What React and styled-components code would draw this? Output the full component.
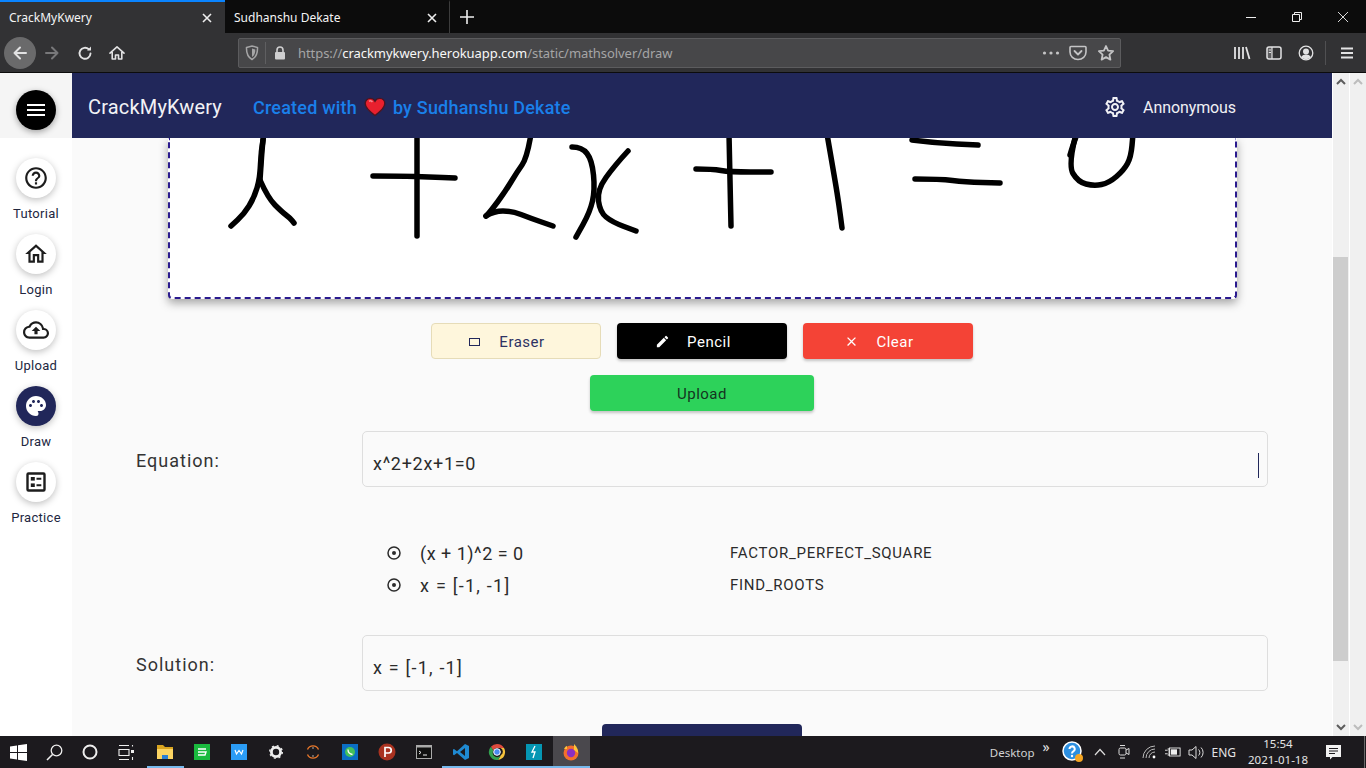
import React from "react";
import styled, { createGlobalStyle } from "styled-components";
import {
  MdClose,
  MdEdit,
  MdHelpOutline,
  MdOutlineCloudUpload,
  MdOutlineHome,
  MdOutlineSettings,
  MdPalette,
} from "react-icons/md";

const GlobalStyle = createGlobalStyle`
  html, body {
    margin: 0;
    padding: 0;
    overflow: hidden;
    background: #1c1a1e;
  }
  * { box-sizing: border-box; }
`;

const Screen = styled.div`
  width: 1366px;
  height: 768px;
  display: flex;
  flex-direction: column;
  overflow: hidden;
  font-family: Roboto, "Liberation Sans", sans-serif;
`;

/* browser chrome */
const TabBar = styled.div`
  height: 33px;
  background: #0c0c0c;
  display: flex;
  align-items: stretch;
  font-family: "Noto Sans", "Open Sans", sans-serif;
  font-size: 12px;
  color: #f4f4f4;
`;

const Tab = styled.div`
  width: 225px;
  display: flex;
  align-items: center;
  justify-content: space-between;
  padding: ${(p) => (p.$active ? "0 12px 0 9px" : "0 11px 0 9px")};
  background: ${(p) => (p.$active ? "#323234" : "transparent")};
  border-top: 2px solid ${(p) => (p.$active ? "#0a84ff" : "transparent")};
  border-right: ${(p) => (p.$active ? "none" : "1px solid #3c3c3c")};
`;

const NewTab = styled.div`
  width: 33px;
  display: flex;
  align-items: center;
  justify-content: center;
`;

const WindowControls = styled.div`
  margin-left: auto;
  display: flex;
`;

const WindowButton = styled.div`
  width: 46px;
  display: flex;
  align-items: center;
  justify-content: center;
`;

const Toolbar = styled.div`
  height: 40px;
  background: #323234;
  border-bottom: 1px solid #0c0c0c;
  display: flex;
  align-items: center;
  padding: 0 3px 0 4px;
  color: #e2e2e3;
`;

const ToolButton = styled.div`
  width: 32px;
  height: 32px;
  border-radius: 50%;
  display: flex;
  align-items: center;
  justify-content: center;
  margin-left: ${(p) => p.$nudge || 0}px;
  background: ${(p) => (p.$hover ? "#6a6a6b" : "transparent")};
  opacity: ${(p) => (p.$dim ? 0.4 : 1)};
`;

const UrlBar = styled.div`
  width: 883px;
  height: 30px;
  margin-left: 105px;
  display: flex;
  align-items: center;
  background: #474749;
  border: 1px solid #5c5c5e;
  border-radius: 2px;
  padding: 0 5px 0 6px;
  font-family: "Noto Sans", "Open Sans", sans-serif;
  font-size: 13px;
  color: #a5a5a6;
`;

const UrlDivider = styled.span`
  width: 1px;
  height: 22px;
  background: #5f5f61;
  margin: 0 7px 0 6px;
`;

const UrlText = styled.span`
  margin: 1px 0 0 11px;
  letter-spacing: -0.06px;
  white-space: nowrap;
  b {
    font-weight: 400;
    color: #f8f8f8;
  }
`;

const UrlActions = styled.div`
  margin-left: auto;
  display: flex;
  align-items: center;
  gap: 6px;
  color: #c4c4c5;
`;

const ToolbarRight = styled.div`
  margin-left: auto;
  display: flex;
  align-items: center;
`;

const ToolDivider = styled.span`
  width: 1px;
  height: 24px;
  background: #505052;
  margin: 0 5px 0 3px;
`;

/* page */
const Viewport = styled.div`
  flex: 1;
  min-height: 0;
  display: flex;
  background: #fff;
`;

const Sidebar = styled.aside`
  width: 72px;
  flex: none;
  background: #fff;
  display: flex;
  flex-direction: column;
  align-items: center;
`;

const SidebarTop = styled.div`
  width: 100%;
  height: 65px;
  background: #f5f5f5;
  display: flex;
  align-items: flex-start;
  justify-content: center;
  padding-top: 17px;
  margin-bottom: 20px;
`;

const MenuButton = styled.div`
  width: 40px;
  height: 40px;
  border-radius: 50%;
  background: #000;
  box-shadow: 0 2px 6px rgba(0, 0, 0, 0.35);
  display: flex;
  flex-direction: column;
  align-items: center;
  justify-content: center;
  gap: 3px;
  span {
    width: 18px;
    height: 2px;
    background: #fff;
  }
`;

const NavItem = styled.div`
  height: 76px;
  display: flex;
  flex-direction: column;
  align-items: center;
  font-size: 13px;
  letter-spacing: 0.3px;
  color: #22273f;
`;

const NavCircle = styled.div`
  width: 40px;
  height: 40px;
  margin-bottom: 8px;
  border-radius: 50%;
  display: flex;
  align-items: center;
  justify-content: center;
  background: ${(p) => (p.$active ? "#21275a" : "#fff")};
  color: ${(p) => (p.$active ? "#fff" : "#1d1d1d")};
  box-shadow: 0 2px 7px rgba(0, 0, 0, 0.25);
`;

const Main = styled.main`
  flex: 1;
  min-width: 0;
  display: flex;
  flex-direction: column;
  background: #fafafa;
`;

const Header = styled.header`
  height: 65px;
  flex: none;
  background: #21275a;
  display: flex;
  align-items: center;
  padding: 3px 96px 0 16px;
  color: #fff;
`;

const Brand = styled.div`
  font-size: 20px;
  letter-spacing: 0.18px;
  width: 165px;
  color: #f2f2f6;
`;

const Credit = styled.div`
  display: flex;
  align-items: center;
  gap: 7px;
  font-size: 18px;
  font-weight: 500;
  letter-spacing: 0.2px;
  color: #1a80ea;
`;

const UserBox = styled.div`
  margin-left: auto;
  display: flex;
  align-items: center;
  gap: 16px;
  font-size: 16px;
  letter-spacing: -0.1px;
  color: #f0f0f4;
`;

const Content = styled.div`
  flex: 1;
  min-height: 0;
  overflow: hidden;
  display: flex;
  flex-direction: column;
  align-items: center;
  padding: 0 64px;
`;

const CanvasBox = styled.div`
  width: 1069px;
  height: 161px;
  flex: none;
  background: #fff;
  border: 2px dashed #2a1a8e;
  border-top: none;
  border-radius: 0 0 4px 4px;
  box-shadow: 0 4px 10px rgba(0, 0, 0, 0.35);
  svg {
    display: block;
    margin-left: -2px;
  }
`;

const ButtonRow = styled.div`
  display: flex;
  gap: 16px;
  margin-top: ${(p) => p.$top}px;
`;

const ToolAction = styled.button`
  width: ${(p) => p.$width || 170}px;
  height: 36px;
  padding: ${(p) => (p.$width ? "1px 0 0" : "1px 18px 0 0")};
  display: flex;
  align-items: center;
  justify-content: center;
  gap: 17px;
  font-family: inherit;
  font-size: 15px;
  letter-spacing: 0.5px;
  border-radius: 4px;
  border: ${(p) => (p.$outlined ? "1px solid #e6dcb8" : "none")};
  background: ${(p) => p.$bg};
  color: ${(p) => p.$fg};
  box-shadow: ${(p) => (p.$outlined ? "none" : "0 2px 3px rgba(0, 0, 0, 0.22)")};
`;

const EraserMark = styled.span`
  width: 11px;
  height: 8px;
  margin-right: 2px;
  border: 1px solid #21275a;
`;

const FieldRow = styled.div`
  width: 100%;
  flex: none;
  display: grid;
  grid-template-columns: 226px 1fr;
  align-items: center;
  margin-top: ${(p) => p.$top}px;
`;

const FieldLabel = styled.label`
  font-size: 18px;
  letter-spacing: 1px;
  color: #333;
  margin-top: 2px;
`;

const FieldValue = styled.div`
  height: 56px;
  background: #fafafa;
  border: 1px solid #dedede;
  border-radius: 5px;
  display: flex;
  align-items: center;
  justify-content: space-between;
  padding: 8px 8px 0 10px;
  font-size: 18px;
  letter-spacing: ${(p) => p.$tracking}px;
  color: #2b2b2b;
`;

const Caret = styled.span`
  width: 1px;
  height: 25px;
  margin-top: 5px;
  background: #21275a;
`;

const Steps = styled.div`
  width: 100%;
  flex: none;
  margin-top: 50px;
  padding-left: 250px;
`;

const StepRow = styled.div`
  height: 32px;
  display: grid;
  grid-template-columns: 34px 310px 1fr;
  align-items: center;
  font-size: 18px;
  color: #2b2b2b;
`;

const StepExpr = styled.span`
  letter-spacing: ${(p) => p.$tracking}px;
`;

const StepName = styled.span`
  font-size: 15px;
  letter-spacing: 0.73px;
`;

const SubmitStub = styled.div`
  width: 200px;
  height: 36px;
  flex: none;
  margin-top: 33px;
  background: #21275a;
  border-radius: 4px;
`;

const ScrollTrack = styled.div`
  width: 17px;
  flex: none;
  background: #f0f0f0;
  border-left: 1px solid #fff;
  display: flex;
  flex-direction: column;
  align-items: center;
  color: ${(p) => (p.$faded ? "#bdbdbd" : "#5d5d5d")};
`;

const ScrollArrow = styled.div`
  height: 17px;
  flex: none;
  margin-top: ${(p) => (p.$end ? "auto" : "0")};
  display: flex;
  align-items: center;
  justify-content: center;
`;

const ScrollThumb = styled.div`
  width: 15px;
  height: 404px;
  margin: 167px 1px 0 0;
  background: #cdcdcd;
`;

/* taskbar */
const Taskbar = styled.footer`
  height: 32px;
  flex: none;
  background: #1c1a1e;
  display: flex;
  align-items: stretch;
  color: #eee;
  font-family: "Noto Sans", "Open Sans", sans-serif;
  font-size: 12px;
`;

const ShellButton = styled.div`
  width: 36px;
  display: flex;
  align-items: center;
  justify-content: center;
`;

const AppSlots = styled.div`
  display: flex;
  margin-left: 3px;
`;

const AppSlot = styled.div`
  width: 36.9px;
  display: flex;
  align-items: center;
  justify-content: center;
  background: ${(p) => (p.$active ? "#4a484d" : "transparent")};
  border-bottom: 2px solid ${(p) => (p.$running ? "#76b9ed" : "transparent")};
  padding-top: 2px;
`;

const Tray = styled.div`
  margin-left: auto;
  display: flex;
  align-items: center;
  color: #e4e4e4;
`;

const DesktopLabel = styled.span`
  font-size: 11.5px;
  color: #d2d2d2;
`;

const TrayChevrons = styled.span`
  width: 20px;
  margin: -12px 0 0 8px;
  font-size: 14px;
`;

const TrayIcon = styled.span`
  width: ${(p) => p.$width || 24}px;
  height: 32px;
  margin-left: ${(p) => p.$gap || 0}px;
  display: flex;
  align-items: center;
  justify-content: center;
`;

const Clock = styled.div`
  width: 72px;
  margin-left: 6px;
  text-align: center;
  line-height: 16px;
  font-size: 11.5px;
`;

const DesktopEdge = styled.span`
  width: 1px;
  height: 32px;
  margin: 0 1px 0 20px;
  background: #6a6a6a;
`;

const Svg = ({ w = 16, h = 16, vb, children, ...rest }) => (
  <svg width={w} height={h} viewBox={vb || `0 0 ${w} ${h}`} fill="none" {...rest}>
    {children}
  </svg>
);

const line = { stroke: "currentColor", strokeWidth: 1.6, strokeLinecap: "round", strokeLinejoin: "round" };

// smooth a freehand stroke through the midpoints of its samples
const strokePath = (pts) => {
  let d = `M${pts[0][0]} ${pts[0][1]}`;
  for (let i = 1; i < pts.length - 1; i++) {
    const mx = (pts[i][0] + pts[i + 1][0]) / 2;
    const my = (pts[i][1] + pts[i + 1][1]) / 2;
    d += ` Q${pts[i][0]} ${pts[i][1]} ${mx} ${my}`;
  }
  const last = pts[pts.length - 1];
  return `${d} L${last[0]} ${last[1]}`;
};

const STROKES = [
  [[264, 134], [261, 150], [260, 178], [254, 198], [244, 214], [231, 226]],
  [[263, 140], [262, 150], [261, 165], [260, 180]],
  [[260, 180], [268, 198], [282, 212], [290, 218], [294, 223]],
  [[373, 176], [400, 176], [430, 177], [455, 178]],
  [[417, 134], [417, 236]],
  [[531, 134], [527, 158], [517, 172], [505, 192], [490, 212], [486, 216]],
  [[486, 216], [494, 211], [512, 211], [530, 218], [553, 226]],
  [[572, 147], [582, 147], [592, 160], [595, 190], [590, 212], [576, 237]],
  [[628, 151], [615, 165], [597, 190], [600, 212], [612, 222], [636, 231]],
  [[696, 169], [712, 169], [730, 172], [771, 172]],
  [[729, 134], [731, 226]],
  [[827, 134], [835, 180], [839, 205], [842, 228]],
  [[912, 140], [935, 143], [978, 145]],
  [[915, 179], [940, 179], [965, 182], [1000, 183]],
  [[1076, 134], [1068, 165], [1078, 182], [1094, 186], [1109, 183], [1124, 170], [1131, 157], [1133, 134]],
  [[1070, 155], [1073, 145], [1077, 134]],
];

const HandDrawing = () => (
  <svg width="1069" height="160" viewBox="168 138 1069 160" fill="none" stroke="#000" strokeWidth="5.5" strokeLinecap="round" strokeLinejoin="round">
    {STROKES.map((pts, i) => (
      <path key={i} d={strokePath(pts)} />
    ))}
  </svg>
);

const Heart = () => (
  <svg width="22" height="20" viewBox="0 0 22 20">
    <path d="M11 18.5 C4 13.5 1.2 10.4 1.2 6.6 C1.2 3.4 3.6 1.4 6.2 1.4 C8.2 1.4 10 2.4 11 4.2 C12 2.4 13.8 1.4 15.8 1.4 C18.4 1.4 20.8 3.4 20.8 6.6 C20.8 10.4 18 13.5 11 18.5 Z" fill="#e8202e" stroke="#4a1420" strokeWidth="1.4" />
    <path d="M5 4.2 C6.2 3.5 7.6 3.8 8.4 5" stroke="#f58a8f" strokeWidth="1.6" fill="none" />
  </svg>
);

const PracticeIcon = () => (
  <svg width="24" height="24" viewBox="0 0 24 24" fill="none">
    <rect x="3.5" y="3.5" width="17" height="17" rx="1" stroke="currentColor" strokeWidth="2.4" />
    <rect x="6.8" y="7" width="4" height="3.6" fill="currentColor" />
    <rect x="6.8" y="13.400" width="4" height="3.6" fill="currentColor" />
    <path d="M12.500 8.800h4.800M12.500 15.200h4.800" stroke="currentColor" strokeWidth="2" />
  </svg>
);

const StepMark = () => (
  <svg width="16" height="16" viewBox="0 0 16 16" fill="none">
    <circle cx="8" cy="8" r="6" stroke="currentColor" strokeWidth="1.500" />
    <circle cx="8" cy="8" r="2" fill="currentColor" />
  </svg>
);

const NAV_ITEMS = [
  { label: "Tutorial", icon: <MdHelpOutline size={26} /> },
  { label: "Login", icon: <MdOutlineHome size={26} /> },
  { label: "Upload", icon: <MdOutlineCloudUpload size={26} /> },
  { label: "Draw", icon: <MdPalette size={24} />, active: true },
  { label: "Practice", icon: <PracticeIcon /> },
];

const STEPS = [
  { expr: "(x + 1)^2 = 0", name: "FACTOR_PERFECT_SQUARE", tracking: 0.5 },
  { expr: "x = [-1, -1]", name: "FIND_ROOTS", tracking: 1.25 },
];

const BrowserTabs = () => (
  <TabBar>
    <Tab $active>
      CrackMyKwery
      <Svg w={12} h={12}><path d="M2 2l8 8M10 2l-8 8" stroke="#eee" strokeWidth="1.6" /></Svg>
    </Tab>
    <Tab>
      Sudhanshu Dekate
      <Svg w={12} h={12}><path d="M2 2l8 8M10 2l-8 8" stroke="#eee" strokeWidth="1.6" /></Svg>
    </Tab>
    <NewTab>
      <Svg w={14} h={14}><path d="M7 0v14M0 7h14" stroke="#eee" strokeWidth="1.6" /></Svg>
    </NewTab>
    <WindowControls>
      <WindowButton><Svg w={10} h={10}><path d="M0 5.5h10" stroke="#eee" /></Svg></WindowButton>
      <WindowButton>
        <Svg w={10} h={10}>
          <path d="M.5 2.5h7v7h-7z M2.5 2.5v-2h7v7h-2" stroke="#eee" />
        </Svg>
      </WindowButton>
      <WindowButton><Svg w={10} h={10}><path d="M0 0l10 10M10 0L0 10" stroke="#eee" strokeWidth=".9" /></Svg></WindowButton>
    </WindowControls>
  </TabBar>
);

const BrowserToolbar = () => (
  <Toolbar>
    <ToolButton $hover>
      <Svg><path d="M14 8H2.5M8 2.5L2.5 8 8 13.5" {...line} strokeWidth="2" /></Svg>
    </ToolButton>
    <ToolButton $dim>
      <Svg><path d="M2 8h11.5M8 2.5L13.5 8 8 13.5" {...line} strokeWidth="2" /></Svg>
    </ToolButton>
    <ToolButton $nudge={1}>
      <Svg><path d="M13.5 8.5a5.5 5.5 0 1 1-1.7-4.2" {...line} strokeWidth="1.9" /><path d="M14 1.5v4h-4z" fill="currentColor" /></Svg>
    </ToolButton>
    <ToolButton>
      <Svg><path d="M1 8.2L8 1.8l7 6.4M3.2 7v7h3.3v-4h3v4h3.3V7" {...line} /></Svg>
    </ToolButton>
    <UrlBar>
      <Svg w={14} h={16} vb="0 0 14 16">
        <path d="M1.5 2.5L7 1l5.5 1.5c.2 5.5-1.3 9.6-5.5 12C2.800 12.100 1.300 8 1.500 2.500z" stroke="currentColor" strokeWidth="1.5" />
        <path d="M7 3.600l3.300.9C10.300 8 9.500 10.500 7 12z" fill="currentColor" />
      </Svg>
      <UrlDivider />
      <Svg w={14} h={16} vb="0 0 14 16">
        <path d="M4 7V5a3 3 0 0 1 6 0v2" stroke="#cfcfd0" strokeWidth="1.600" />
        <rect x="2" y="7" width="10" height="7.500" rx="1" fill="#cfcfd0" />
      </Svg>
      <UrlText>https://<b>crackmykwery.herokuapp.com</b>/static/mathsolver/draw</UrlText>
      <UrlActions>
        <Svg w={18} h={4}>
          <circle cx="2.500" cy="2" r="1.600" fill="currentColor" /><circle cx="9" cy="2" r="1.600" fill="currentColor" /><circle cx="15.500" cy="2" r="1.600" fill="currentColor" />
        </Svg>
        <Svg w={18} h={16} style={{ marginLeft: 3 }}>
          <path d="M2 1.500h14a1 1 0 0 1 1 1V7a8 7.500 0 0 1-16 0V2.500a1 1 0 0 1 1-1z" stroke="currentColor" strokeWidth="1.600" />
          <path d="M5.500 6L9 9.500 12.500 6" {...line} strokeWidth="1.800" />
        </Svg>
        <Svg w={18} h={18} style={{ marginLeft: 4 }}>
          <path d="M9 2l2.100 4.600 5 .6-3.700 3.400 1 5L9 13.100 4.600 15.600l1-5L1.900 7.200l5-.6z" {...line} strokeWidth="1.800" />
        </Svg>
      </UrlActions>
    </UrlBar>
    <ToolbarRight>
      <ToolButton>
        <Svg w={18} h={16}><path d="M2 2v12M6 2v12M10 2v12M13 2l3.500 12" stroke="currentColor" strokeWidth="1.800" /></Svg>
      </ToolButton>
      <ToolButton>
        <Svg w={16} h={14}>
          <rect x="1" y="1" width="14" height="12" rx="2" stroke="currentColor" strokeWidth="1.500" />
          <path d="M6 1v12M2.800 4H5M2.800 6.500H5" stroke="currentColor" strokeWidth="1.200" />
          <rect x="1" y="1" width="5" height="12" rx="1" fill="currentColor" opacity=".25" />
        </Svg>
      </ToolButton>
      <ToolButton>
        <Svg>
          <circle cx="8" cy="8" r="6.800" stroke="currentColor" strokeWidth="1.300" />
          <circle cx="8" cy="6.500" r="3" fill="currentColor" />
          <path d="M3 12.300c1.200-2 3-2.700 5-2.700s3.800.7 5 2.700c-2.800 2.400-7.200 2.400-10 0z" fill="currentColor" />
        </Svg>
      </ToolButton>
      <ToolDivider />
      <ToolButton>
        <Svg w={14} h={14}><path d="M1 2.500h12M1 7h12M1 11.500h12" stroke="currentColor" strokeWidth="1.800" /></Svg>
      </ToolButton>
    </ToolbarRight>
  </Toolbar>
);

const TaskIcons = [
  { running: true, icon: (
    <Svg w={18} h={16}>
      <path d="M1 1h6l2 2h8v4H1z" fill="#d9a520" />
      <path d="M1 5h16v10H1z" fill="#fcd462" />
      <path d="M6 15v-4h6v4z" fill="#2d7fd3" />
    </Svg>
  ) },
  { icon: (
    <Svg>
      <rect width="16" height="16" fill="#1aba3e" />
      <path d="M4 5h8M4 8h8l-1 3H4" stroke="#fff" strokeWidth="1.400" />
    </Svg>
  ) },
  { icon: (
    <Svg>
      <rect width="16" height="16" fill="#2b9cf5" />
      <path d="M4 6l1.500 4L8 6.500 10.500 10 12 6" stroke="#fff" strokeWidth="1.200" />
    </Svg>
  ) },
  { icon: (
    <Svg>
      <circle cx="8" cy="8" r="4.600" stroke="#eee" strokeWidth="2.800" />
      <circle cx="8" cy="8" r="6.300" stroke="#eee" strokeWidth="1.400" strokeDasharray="2 2.950" />
    </Svg>
  ) },
  { icon: (
    <Svg>
      <path d="M2.500 5.500a6 6 0 0 1 11 0M2.500 10.500a6 6 0 0 0 11 0" stroke="#e8772a" strokeWidth="1.400" />
      <circle cx="8" cy="4" r=".9" fill="#888" /><circle cx="8" cy="12" r=".9" fill="#888" />
    </Svg>
  ) },
  { icon: (
    <Svg>
      <rect width="16" height="16" fill="#0b6fc4" />
      <circle cx="8" cy="8" r="5" fill="#45c15a" />
      <path d="M6 5.500c0 3 1.500 4.500 4.500 5" stroke="#fff" strokeWidth="1.300" />
    </Svg>
  ) },
  { icon: (
    <Svg w={18} h={18}>
      <circle cx="9" cy="9" r="8.500" fill="#a93220" />
      <path d="M7 14V4.500h3.500a2.500 2.500 0 0 1 0 5.500H7" stroke="#fff" strokeWidth="1.700" />
    </Svg>
  ) },
  { icon: (
    <Svg>
      <rect x=".5" y="1.500" width="15" height="13" fill="#111" stroke="#aaa" />
      <path d="M.5 1.500h15v2H.5z" fill="#aaa" />
      <path d="M3 7l2 1.500L3 10M7 11h4" stroke="#eee" strokeWidth="1" />
    </Svg>
  ) },
  { running: true, icon: (
    <Svg w={18} h={18}>
      <path d="M13 1l4 2v12l-4 2-8-7-3 2.300L1 11.500V6.500L2 6l3 2.300z" fill="#1f8ad2" />
      <path d="M13 5L8 9l5 4z" fill="#1c1a1e" />
    </Svg>
  ) },
  { running: true, icon: (
    <Svg w={18} h={18}>
      <path d="M9 1a8 8 0 0 1 7 4H9a4 4 0 0 0-3.700 2.500L2.900 3.800A8 8 0 0 1 9 1z" fill="#dd4a3d" />
      <path d="M16 5a8 8 0 0 1-6 12l3-5a4 4 0 0 0-.5-7z" fill="#f6c23c" />
      <path d="M2.900 3.800A8 8 0 0 0 10 17l3-5A4 4 0 0 1 5.300 7.500z" fill="#32a04f" />
      <circle cx="9" cy="9" r="3.300" fill="#4a8bf0" stroke="#fff" />
    </Svg>
  ) },
  { running: true, icon: (
    <Svg>
      <rect width="16" height="16" fill="#0596b3" />
      <path d="M9 2L6 8h3l-2 6" stroke="#fff" strokeWidth="1.300" />
    </Svg>
  ) },
  { running: true, active: true, icon: (
    <Svg w={18} h={18}>
      <circle cx="9" cy="10" r="7.500" fill="#f3702c" />
      <path d="M12 1c3 3 4.500 6 4 9L12 7z" fill="#fcc33a" />
      <circle cx="9" cy="10" r="4.200" fill="#8b2fc2" />
      <path d="M2 6c1 -2 2 -3 3 -3v3z" fill="#fcc33a" />
    </Svg>
  ) },
];

const SystemTaskbar = () => (
  <Taskbar>
    <ShellButton>
      <Svg w={17} h={17}>
        <path d="M0 2.500L7 1.500v6.500H0zM8 1.300L17 0v8H8zM0 9h7v6.500L0 14.500zM8 9h9v8l-9-1.300z" fill="#fff" />
      </Svg>
    </ShellButton>
    <ShellButton>
      <Svg w={17} h={17}>
        <circle cx="10.500" cy="6.500" r="5.300" stroke="#eee" strokeWidth="1.300" />
        <path d="M6.500 10.500L1 16" stroke="#eee" strokeWidth="1.600" />
      </Svg>
    </ShellButton>
    <ShellButton>
      <Svg w={16} h={16}><circle cx="8" cy="8" r="6.500" stroke="#eee" strokeWidth="2" /></Svg>
    </ShellButton>
    <ShellButton>
      <Svg w={17} h={17}>
        <path d="M1 1.500h10M1 15.500h10M1 5.500h10v6H1zM14.500 1v1.500M14.500 13v3" stroke="#eee" strokeWidth="1.100" />
        <rect x="13" y="6" width="3" height="3" fill="#eee" />
      </Svg>
    </ShellButton>
    <AppSlots>
      {TaskIcons.map((t, i) => (
        <AppSlot key={i} $running={t.running} $active={t.active}>{t.icon}</AppSlot>
      ))}
    </AppSlots>
    <Tray>
      <DesktopLabel>Desktop</DesktopLabel>
      <TrayChevrons>»</TrayChevrons>
      <TrayIcon $width={22}>
        <svg width="22" height="22" viewBox="0 0 22 22">
          <circle cx="10" cy="10" r="9" fill="#2c8fe0" stroke="#fff" strokeWidth="1.500" />
          <path d="M7.500 8a2.600 2.600 0 1 1 3.800 2.300c-1 .6-1.300 1-1.300 2.200" stroke="#fff" strokeWidth="2" fill="none" />
          <circle cx="10" cy="15" r="1.200" fill="#fff" />
          <circle cx="17" cy="17" r="4" fill="#f5a623" />
        </svg>
      </TrayIcon>
      <TrayIcon $width={30} $gap={1}>
        <Svg w={12} h={8}><path d="M1 7l5-5.500L11 7" stroke="#ddd" strokeWidth="1.200" /></Svg>
      </TrayIcon>
      <TrayIcon $width={18}>
        <Svg w={12} h={16}>
          <rect x="1" y="4" width="7" height="7" rx="1.500" stroke="#ddd" />
          <path d="M8 6l3-1.500v6L8 9M2 1.500h5M2 14h5" stroke="#ddd" />
        </Svg>
      </TrayIcon>
      <TrayIcon $width={32}>
        <Svg w={14} h={14}>
          <path d="M1 13a12 12 0 0 1 12-12M4 13a9 9 0 0 1 9-9M7 13a6 6 0 0 1 6-6" stroke="#bbb" strokeWidth="1" />
          <circle cx="12" cy="12" r="1.400" fill="#fff" />
        </Svg>
      </TrayIcon>
      <TrayIcon $width={16}>
        <Svg w={18} h={12}>
          <path d="M0 4h3M0 8h3M3 2.500h1.500v7H3" stroke="#eee" />
          <rect x="5" y="1.500" width="12" height="9" stroke="#eee" />
          <rect x="6.500" y="3" width="7" height="6" fill="#eee" />
        </Svg>
      </TrayIcon>
      <TrayIcon $width={30}>
        <Svg w={17} h={15}>
          <path d="M1 5h3l4-3.500v12L4 10H1z" stroke="#ddd" />
          <path d="M10.500 4.500a4 4 0 0 1 0 6M13 2.500a7 7 0 0 1 0 10" stroke="#ddd" />
        </Svg>
      </TrayIcon>
      <span>ENG</span>
      <Clock>15:54<br />2021-01-18</Clock>
      <TrayIcon $width={22} $gap={8}>
        <Svg w={17} h={17}>
          <path d="M1 1h15v12H7.500L5 15.500V13H1z" fill="#f2f2f2" />
          <path d="M4 4.500h9M4 7h9M4 9.500h6" stroke="#1c1a1e" />
        </Svg>
      </TrayIcon>
      <DesktopEdge />
    </Tray>
  </Taskbar>
);

export default function App() {
  return (
    <Screen>
      <GlobalStyle />
      <BrowserTabs />
      <BrowserToolbar />
      <Viewport>
        <Sidebar>
          <SidebarTop>
            <MenuButton><span /><span /><span /></MenuButton>
          </SidebarTop>
          {NAV_ITEMS.map((item) => (
            <NavItem key={item.label}>
              <NavCircle $active={item.active}>{item.icon}</NavCircle>
              {item.label}
            </NavItem>
          ))}
        </Sidebar>
        <Main>
          <Header>
            <Brand>CrackMyKwery</Brand>
            <Credit>Created with <Heart /> by Sudhanshu Dekate</Credit>
            <UserBox>
              <MdOutlineSettings size={24} />
              Annonymous
            </UserBox>
          </Header>
          <Content>
            <CanvasBox><HandDrawing /></CanvasBox>
            <ButtonRow $top={24}>
              <ToolAction $outlined $bg="#fef6dc" $fg="#2d3263">
                <EraserMark /> Eraser
              </ToolAction>
              <ToolAction $bg="#000" $fg="#fff">
                <MdEdit size={15} /> Pencil
              </ToolAction>
              <ToolAction $bg="#f44336" $fg="#fff">
                <MdClose size={15} /> Clear
              </ToolAction>
            </ButtonRow>
            <ButtonRow $top={16}>
              <ToolAction $width={224} $bg="#2dd25a" $fg="#14331f">Upload</ToolAction>
            </ButtonRow>
            <FieldRow $top={20}>
              <FieldLabel>Equation:</FieldLabel>
              <FieldValue $tracking={0.7}>x^2+2x+1=0<Caret /></FieldValue>
            </FieldRow>
            <Steps>
              {STEPS.map((step) => (
                <StepRow key={step.name}>
                  <StepMark />
                  <StepExpr $tracking={step.tracking}>{step.expr}</StepExpr>
                  <StepName>{step.name}</StepName>
                </StepRow>
              ))}
            </Steps>
            <FieldRow $top={34}>
              <FieldLabel>Solution:</FieldLabel>
              <FieldValue $tracking={1.2}>x = [-1, -1]</FieldValue>
            </FieldRow>
            <SubmitStub />
          </Content>
        </Main>
        <ScrollTrack>
          <ScrollArrow>
            <Svg w={10} h={7}><path d="M1 6l4-4 4 4" stroke="currentColor" strokeWidth="2" /></Svg>
          </ScrollArrow>
          <ScrollThumb />
          <ScrollArrow $end>
            <Svg w={10} h={7}><path d="M1 1l4 4 4-4" stroke="currentColor" strokeWidth="2" /></Svg>
          </ScrollArrow>
        </ScrollTrack>
        <ScrollTrack $faded>
          <ScrollArrow>
            <Svg w={10} h={7}><path d="M1 6l4-4 4 4" stroke="currentColor" strokeWidth="2" /></Svg>
          </ScrollArrow>
          <ScrollArrow $end>
            <Svg w={10} h={7}><path d="M1 1l4 4 4-4" stroke="currentColor" strokeWidth="2" /></Svg>
          </ScrollArrow>
        </ScrollTrack>
      </Viewport>
      <SystemTaskbar />
    </Screen>
  );
}
